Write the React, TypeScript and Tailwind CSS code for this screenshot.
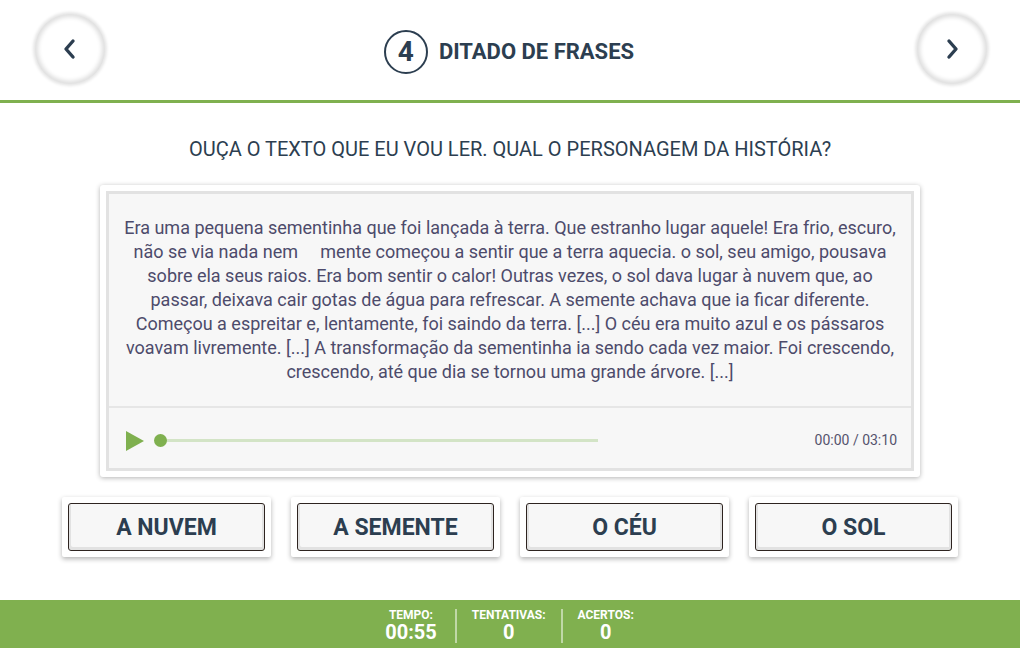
import React from "react";

const lines = [
  "Era uma pequena sementinha que foi lançada à terra. Que estranho lugar aquele! Era frio, escuro,",
  "não se via nada nem \u00a0\u00a0\u00a0\u00a0mente começou a sentir que a terra aquecia. o sol, seu amigo, pousava",
  "sobre ela seus raios. Era bom sentir o calor! Outras vezes, o sol dava lugar à nuvem que, ao",
  "passar, deixava cair gotas de água para refrescar. A semente achava que ia ficar diferente.",
  "Começou a espreitar e, lentamente, foi saindo da terra. [...] O céu era muito azul e os pássaros",
  "voavam livremente. [...] A transformação da sementinha ia sendo cada vez maior. Foi crescendo,",
  "crescendo, até que dia se tornou uma grande árvore. [...]",
];

function NavButton({ dir }: { dir: "left" | "right" }) {
  return (
    <div className="w-[70px] h-[70px] rounded-full bg-white flex items-center justify-center shadow-[0_0_3px_2px_rgba(0,0,0,0.10),inset_0_0_4px_3px_rgba(0,0,0,0.13)]">
      <svg width="16" height="26" viewBox="0 0 16 26" fill="none">
        {dir === "left" ? (
          <polyline points="11,5 4,13 11,21" stroke="#2c3e50" strokeWidth="3.4" strokeLinecap="round" strokeLinejoin="round" />
        ) : (
          <polyline points="5,5 12,13 5,21" stroke="#2c3e50" strokeWidth="3.4" strokeLinecap="round" strokeLinejoin="round" />
        )}
      </svg>
    </div>
  );
}

function Answer({ label }: { label: string }) {
  return (
    <div className="w-[209px] h-[60px] bg-white p-[6px] rounded-[2px] shadow-[0_2px_5px_rgba(0,0,0,0.3)]">
      <div className="w-full h-full border border-[#2e2420] rounded-[3px] bg-[#f7f7f7] shadow-[inset_2px_-3px_0_#e2e2e2,inset_-2px_0_0_#e2e2e2] flex items-center justify-center pt-[3px] text-[23px] font-bold text-[#2c3e50]">
        {label}
      </div>
    </div>
  );
}

export default function App() {
  return (
    <div
      className="w-[1020px] h-[648px] bg-white flex flex-col overflow-hidden"
      style={{ fontFamily: "Roboto, 'Liberation Sans', sans-serif" }}
    >
      <header className="h-[103px] shrink-0 border-b-[3px] border-[#7fb04f] flex items-center justify-between pl-[35px] pr-[33px] pb-[3px]">
        <NavButton dir="left" />
        <div className="flex items-center gap-[11px] mt-[6px] mr-[4px]">
          <div className="w-[44px] h-[44px] rounded-full border-2 border-[#2c3e50] flex items-center justify-center text-[28px] font-bold text-[#2c3e50] leading-none">
            4
          </div>
          <div className="text-[22px] font-bold text-[#2c3e50]">DITADO DE FRASES</div>
        </div>
        <NavButton dir="right" />
      </header>

      <main className="flex-1 flex flex-col items-center pt-[34px]">
        <div className="text-[20px] text-[#2c3e50] leading-[24px]">
          OUÇA O TEXTO QUE EU VOU LER. QUAL O PERSONAGEM DA HISTÓRIA?
        </div>

        <div className="mt-[24px] w-[820px] h-[292px] bg-white p-[6px] rounded-[3px] shadow-[0_1px_5px_rgba(0,0,0,0.3)]">
          <div className="w-full h-full bg-[#f7f7f7] border-[3px] border-[#e2e2e2] flex flex-col">
            <div className="h-[214px] border-b-2 border-[#e6e6e6] pt-[22px] flex flex-col items-center text-[18px] leading-[24px] text-[#4d4b6b]">
              {lines.map((l, i) => (
                <div key={i} className="whitespace-pre">{l}</div>
              ))}
            </div>
            <div className="flex-1 flex items-center pl-[17px] pr-[14px] pt-[5px]">
              <svg width="18" height="20" viewBox="0 0 18 20">
                <polygon points="0,0 18,10 0,20" fill="#7fb04f" />
              </svg>
              <div className="relative ml-[11px] w-[443px] h-[3px] bg-[#d3e4c6]">
                <div className="absolute left-[-1px] top-[-5px] w-[13px] h-[13px] rounded-full bg-[#7fb04f]" />
              </div>
              <div className="ml-auto text-[14px] text-[#55536d]">00:00 / 03:10</div>
            </div>
          </div>
        </div>

        <div className="mt-[20px] flex gap-[20px]">
          <Answer label="A NUVEM" />
          <Answer label="A SEMENTE" />
          <Answer label="O CÉU" />
          <Answer label="O SOL" />
        </div>
      </main>

      <footer className="h-[48px] shrink-0 bg-[#80b04f] flex items-center justify-center text-white">
        <div className="flex items-stretch h-[34px] mt-[4px] mr-[4px]">
          <div className="flex flex-col items-center justify-center px-[18px]">
            <div className="text-[12px] font-bold leading-[13px]">TEMPO:</div>
            <div className="text-[20px] font-bold leading-[21px]">00:55</div>
          </div>
          <div className="w-[2px] bg-white/50" />
          <div className="flex flex-col items-center justify-center px-[15px]">
            <div className="text-[12px] font-bold leading-[13px]">TENTATIVAS:</div>
            <div className="text-[20px] font-bold leading-[21px]">0</div>
          </div>
          <div className="w-[2px] bg-white/50" />
          <div className="flex flex-col items-center justify-center px-[15px]">
            <div className="text-[12px] font-bold leading-[13px]">ACERTOS:</div>
            <div className="text-[20px] font-bold leading-[21px]">0</div>
          </div>
        </div>
      </footer>
    </div>
  );
}
